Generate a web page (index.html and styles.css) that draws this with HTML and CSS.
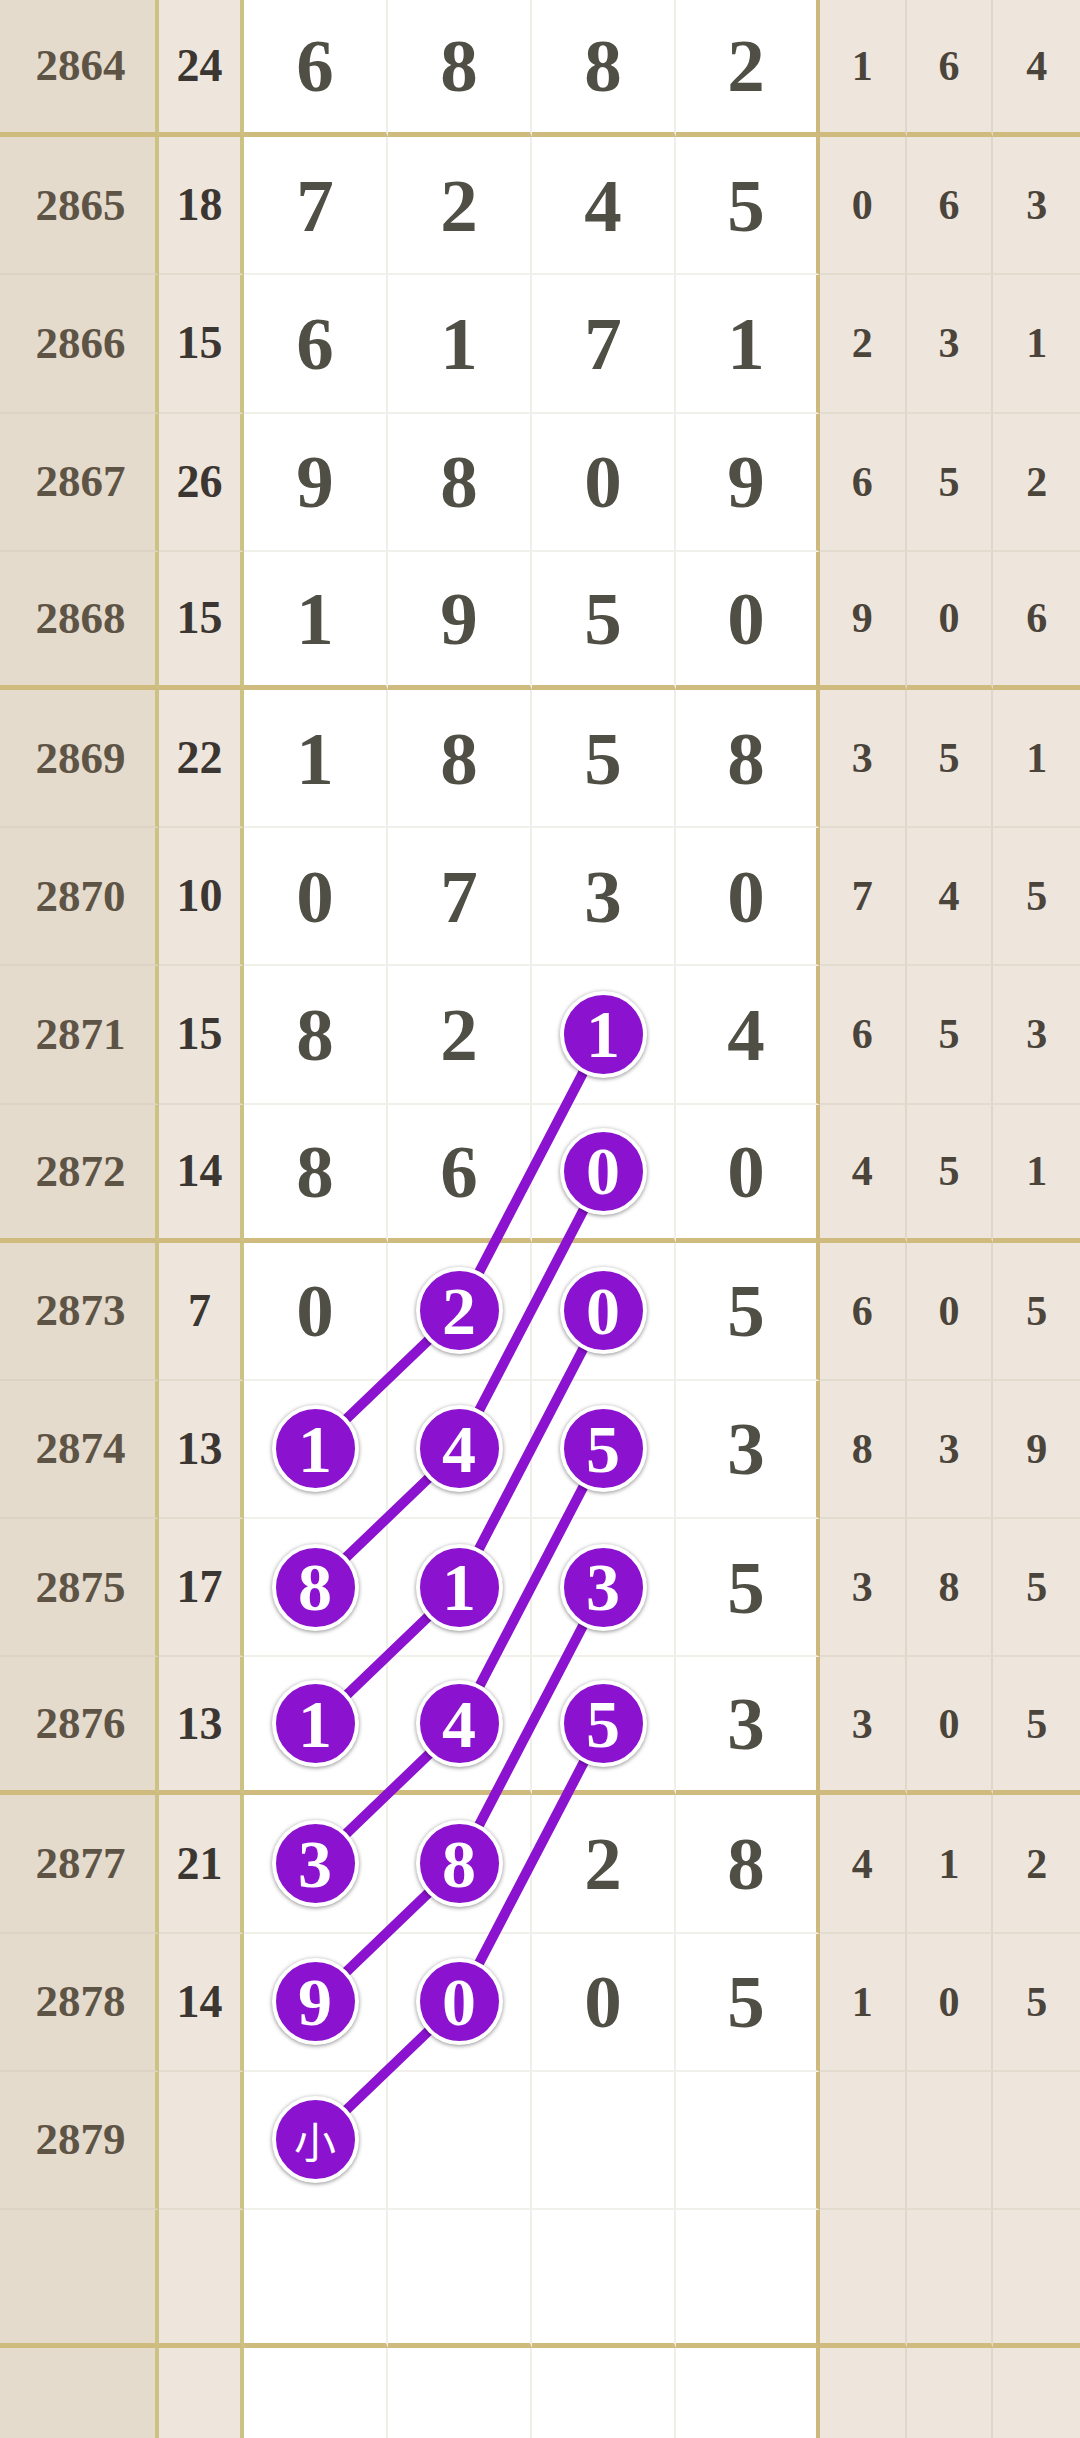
FILE: index.html
```html
<!DOCTYPE html>
<html lang="zh-CN">
<head>
    <meta charset="UTF-8">
    <meta name="viewport" content="width=device-width, initial-scale=1.0">
    <title>走势图</title>
    <link rel="stylesheet" href="styles.css">
</head>
<body>
    <div class="sheet" id="sheet">
        <svg class="links" id="links" width="1080" height="2500"></svg>
    </div>

    <script>
        const sheet = document.getElementById('sheet');
        const links = document.getElementById('links');

        // issue, sum, four drawn digits, three tail digits
        const rows = [
            ['2864', '24', '6882', '164'],
            ['2865', '18', '7245', '063'],
            ['2866', '15', '6171', '231'],
            ['2867', '26', '9809', '652'],
            ['2868', '15', '1950', '906'],
            ['2869', '22', '1858', '351'],
            ['2870', '10', '0730', '745'],
            ['2871', '15', '8214', '653'],
            ['2872', '14', '8600', '451'],
            ['2873', '7', '0205', '605'],
            ['2874', '13', '1453', '839'],
            ['2875', '17', '8135', '385'],
            ['2876', '13', '1453', '305'],
            ['2877', '21', '3828', '412'],
            ['2878', '14', '9005', '105'],
            ['2879', '', '小', ''],
            ['', '', '', ''],
            ['', '', '', '']
        ];

        // row index -> columns shown as balls
        const balls = {
            7: [2], 8: [2], 9: [1, 2], 10: [0, 1, 2], 11: [0, 1, 2],
            12: [0, 1, 2], 13: [0, 1], 14: [0, 1], 15: [0]
        };

        const ROW_H = 138.2;

        rows.forEach(([issue, sum, digits, tail], i) => {
            const row = document.createElement('div');
            row.className = 'row' + (i % 4 === 0 ? ' end' : '');
            let html = `<div class="cell issue">${issue}</div><div class="cell sum">${sum}</div>`;
            for (let c = 0; c < 4; c++) {
                const d = digits[c] || '';
                const isBall = (balls[i] || []).includes(c);
                const inner = isBall ? `<span class="ball${d === '小' ? ' cjk' : ''}">${d}</span>` : d;
                html += `<div class="cell num${c === 3 ? ' last' : ''}">${inner}</div>`;
            }
            for (let c = 0; c < 3; c++) {
                html += `<div class="cell tail">${tail[c] || ''}</div>`;
            }
            row.innerHTML = html;
            sheet.appendChild(row);
        });

        // each chain: top-right ball, two rows down one col left, then one more row down
        const cx = c => 315 + 144 * c;
        const cy = r => 68 + ROW_H * r;
        let lines = '';
        for (let r = 7; r <= 12; r++) {
            const pts = [[r, 2], [r + 2, 1], [r + 3, 0]]
                .map(([pr, pc]) => `${cx(pc)},${cy(pr).toFixed(1)}`).join(' ');
            lines += `<polyline points="${pts}" />`;
        }
        links.innerHTML = lines;
    </script>
</body>
</html>
```

FILE: styles.css
```css
body {
    margin: 0;
    background-color: #fff;
    overflow: hidden;
    font-family: "Liberation Serif", "Noto Sans CJK SC", serif;
}

.sheet {
    position: relative;
    width: 1080px;
    margin-top: -1px;
}

.links {
    position: absolute;
    top: 0;
    left: 0;
    z-index: 1;
    pointer-events: none;
}

.links polyline {
    fill: none;
    stroke: #8b12cf;
    stroke-width: 10;
    stroke-linejoin: round;
}

.row {
    display: grid;
    grid-template-columns: 159px 85px repeat(4, 144px) repeat(3, 1fr);
    height: 138.2px;
}

.cell {
    box-sizing: border-box;
    display: flex;
    align-items: center;
    justify-content: center;
    font-weight: bold;
    line-height: 1;
    border-bottom: 2px solid #f1f0ea;
    border-right: 2px solid #efeee8;
}

.issue {
    background-color: #e5dbcd;
    border-right: 4px solid #cbc283;
    border-bottom-color: #ddd3c4;
    color: #5e5446;
    font-size: 45px;
    padding-left: 6px;
}

.sum {
    background-color: #eee6dd;
    border-right: 4px solid #cbc283;
    border-bottom-color: #e4dbcf;
    color: #3b3631;
    font-size: 46px;
}

.num {
    background-color: #fff;
    color: #504f45;
    font-size: 75px;
}

.num.last {
    border-right: 4px solid #cdb97d;
}

.tail {
    background-color: #eee6dd;
    border-right-color: #e0d7ca;
    border-bottom-color: #e4dbcf;
    color: #4a443b;
    font-size: 42px;
}

.tail:last-child {
    border-right: 0;
}

.row.end .cell {
    border-bottom: 5px solid #d0bb7e;
}

.ball {
    position: relative;
    z-index: 2;
    display: flex;
    align-items: center;
    justify-content: center;
    width: 79px;
    height: 79px;
    border: 4px solid #fff;
    border-radius: 50%;
    background-color: #8b12cf;
    box-shadow: 0 1px 4px rgba(0, 0, 0, 0.45);
    color: #fff;
    font-size: 68px;
}

.ball.cjk {
    font-family: "Noto Sans CJK SC", sans-serif;
    font-weight: normal;
    font-size: 42px;
}
```
